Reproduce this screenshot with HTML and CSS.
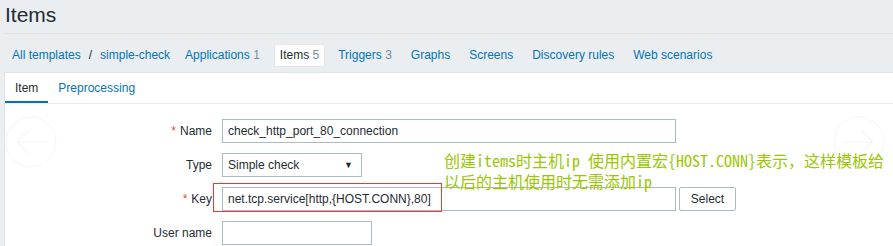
FILE: index.html
```html
<!DOCTYPE html>
<html lang="zh">
  <head>
    <meta charset="UTF-8" />
    <meta name="viewport" content="width=device-width, initial-scale=1.0" />
    <title>Items</title>
    <link rel="stylesheet" href="styles.css">
  </head>
  <body>
    <header class="page-header">
      <h1>Items</h1>
    </header>
    <nav class="header-nav">
      <ul class="breadcrumbs">
        <li><a href="">All templates</a></li>
        <li class="sep">/</li>
        <li><a href="">simple-check</a></li>
      </ul>
      <ul class="objects">
        <li><a href="">Applications</a> <span class="count">1</span></li>
        <li class="selected"><span>Items</span> <span class="count">5</span></li>
        <li><a href="">Triggers</a> <span class="count">3</span></li>
        <li><a href="">Graphs</a></li>
        <li><a href="">Screens</a></li>
        <li><a href="">Discovery rules</a></li>
        <li><a href="">Web scenarios</a></li>
      </ul>
    </nav>
    <main class="panel">
      <ul class="tabs">
        <li class="active"><a href="">Item</a></li>
        <li><a href="">Preprocessing</a></li>
      </ul>
      <form class="item-form">
        <label class="required">Name</label>
        <div><input type="text" class="wide" value="check_http_port_80_connection" /></div>

        <label>Type</label>
        <div>
          <div class="select">Simple check<span class="arrow">&#9660;</span></div>
        </div>

        <label class="required">Key</label>
        <div class="with-button">
          <input type="text" class="wide" value="net.tcp.service[http,{HOST.CONN},80]" />
          <button type="button">Select</button>
        </div>

        <label>User name</label>
        <div><input type="text" class="short" value="" /></div>
      </form>

      <!-- flechas de navegación casi invisibles -->
      <svg class="nav-arrow left" width="52" height="52" viewBox="0 0 52 52">
        <circle cx="26" cy="26" r="25" fill="none" stroke="#f5f5f5" stroke-width="1" />
        <path d="M12 26 H42 M12 26 L24 14 M12 26 L24 38" fill="none" stroke="#f5f5f5" stroke-width="1.2" />
      </svg>
      <svg class="nav-arrow right" width="52" height="52" viewBox="0 0 52 52">
        <circle cx="26" cy="26" r="25" fill="none" stroke="#f5f5f5" stroke-width="1" />
        <path d="M10 26 H40 M40 26 L28 14 M40 26 L28 38" fill="none" stroke="#f5f5f5" stroke-width="1.2" />
      </svg>

      <!-- anotaciones encima de la captura -->
      <div class="mark-box"></div>
      <p class="note">创建items时主机ip 使用内置宏{HOST.CONN}表示，这样模板给<br>以后的主机使用时无需添加ip</p>
    </main>
  </body>
</html>
```

FILE: styles.css
```css
body {
  margin: 0;
  background: #ebeef0;
  font-family: "Liberation Sans", Arial, sans-serif;
  font-size: 12px;
  color: #1f2c33;
  overflow: hidden;
}
a {
  color: #0275b8;
  text-decoration: none;
}
ul {
  list-style: none;
  margin: 0;
  padding: 0;
}

/* Cabecera */
.page-header {
  margin-left: 4px;
  padding: 3px 0 6px 1px;
  border-bottom: 1px solid #dfe4e7;
}
.page-header h1 {
  margin: 0;
  font-size: 21px;
  line-height: 24px;
  font-weight: normal;
}

/* Navegación */
.header-nav {
  display: flex;
  padding: 10px 0 5px 12px;
}
.header-nav ul {
  display: flex;
}
.header-nav li {
  line-height: 23px;
  padding: 0 6px;
}
.breadcrumbs {
  margin-right: 9px;
}
.breadcrumbs li {
  padding: 0 !important;
}
.breadcrumbs .sep {
  padding: 0 8px !important;
  color: #1f2c33;
}
.objects {
  gap: 7px;
}
.count {
  color: #768d99;
}
.objects .selected {
  background: #fff;
  border: 1px solid #e4e8eb;
  border-radius: 2px;
  line-height: 21px;
  padding: 0 5px;
  margin-left: 1px;
}

/* Panel blanco */
.panel {
  position: relative;
  margin-left: 4px;
  background: #fff;
  border-top: 1px solid #dfe4e7;
  border-left: 1px solid #dfe4e7;
  height: 173px;
}
.tabs {
  display: flex;
  border-bottom: 1px solid #ebeef0;
}
.tabs a {
  display: block;
  padding: 3px 10px 0;
  line-height: 25px;
  border-bottom: 2px solid transparent;
}
.tabs .active a {
  color: #1f2c33;
  border-bottom-color: #0275b8;
}

/* Formulario */
.item-form {
  display: grid;
  grid-template-columns: 207px auto;
  column-gap: 10px;
  row-gap: 10px;
  padding-top: 15px;
  align-items: center;
}
.item-form label {
  text-align: right;
}
.item-form label.required::before {
  content: "*";
  color: #d64e4e;
  margin-right: 4px;
}
.item-form input,
.item-form .select,
.item-form button {
  box-sizing: border-box;
  height: 24px;
  border: 1px solid #acbbc2;
  background: #fff;
  font-family: "Liberation Sans", Arial, sans-serif;
  font-size: 12px;
  color: #1f2c33;
  margin: 0;
}
.item-form input {
  padding: 0 5px;
  display: block;
}
.item-form input.wide {
  width: 454px;
}
.item-form input.short {
  width: 150px;
}
.item-form .select {
  width: 140px;
  padding: 0 5px;
  line-height: 22px;
  position: relative;
}
.item-form .select .arrow {
  position: absolute;
  right: 8px;
  top: 0;
  font-size: 9px;
}
.with-button {
  display: flex;
  gap: 3px;
}
.item-form button {
  width: 57px;
  padding: 0;
  border-radius: 2px;
}

.nav-arrow {
  position: absolute;
  top: 43px;
}
.nav-arrow.left {
  left: 0;
}
.nav-arrow.right {
  left: 828px;
}

.mark-box {
  position: absolute;
  left: 208px;
  top: 110px;
  width: 227px;
  height: 27px;
  border: 1px solid #e33b3b;
}
.note {
  position: absolute;
  left: 439px;
  top: 77px;
  margin: 0;
  font-family: "Noto Sans Mono CJK SC", "Noto Sans CJK SC", monospace;
  font-size: 16px;
  line-height: 21px;
  color: #99c800;
  white-space: nowrap;
}
```
